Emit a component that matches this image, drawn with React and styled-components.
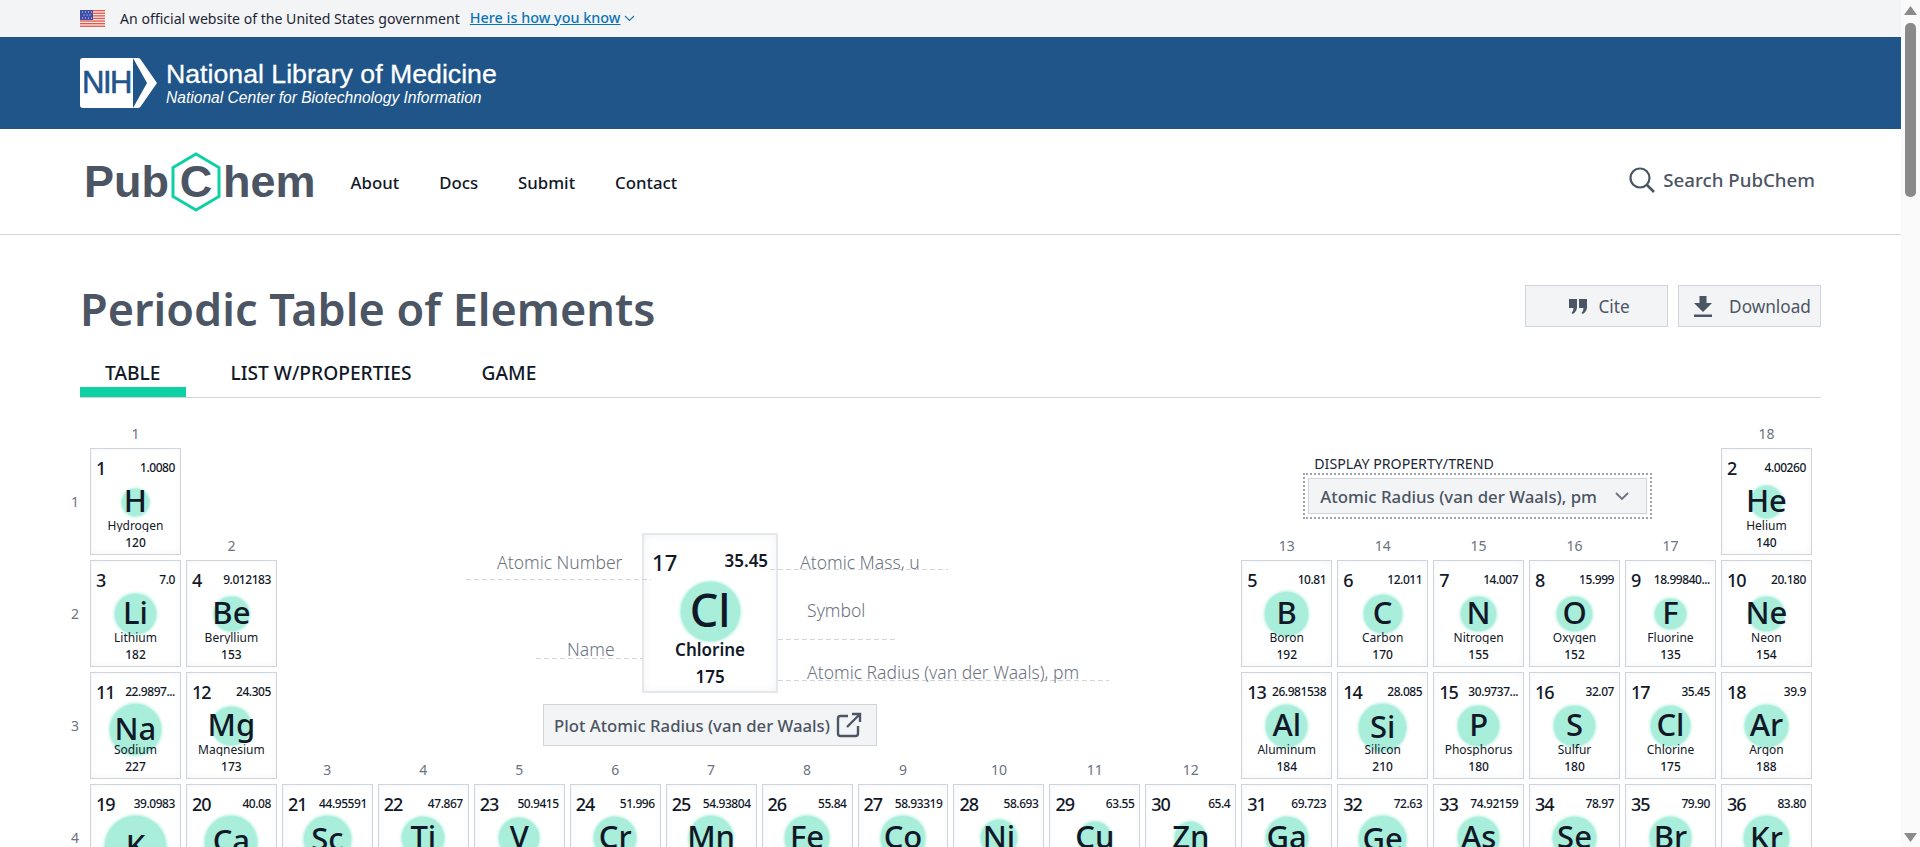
import styled, { createGlobalStyle } from "styled-components";

const GlobalStyle = createGlobalStyle`
    html, body {
        margin: 0;
        height: 100%;
        overflow: hidden;
        background: #ffffff;
        font-family: "Noto Sans", "Open Sans", sans-serif;
    }
    * {
        box-sizing: border-box;
    }
`;

const groupLabels = [
    { n: 1, col: 1, row: 0 },
    { n: 18, col: 18, row: 0 },
    { n: 2, col: 2, row: 1 },
    { n: 13, col: 13, row: 1 },
    { n: 14, col: 14, row: 1 },
    { n: 15, col: 15, row: 1 },
    { n: 16, col: 16, row: 1 },
    { n: 17, col: 17, row: 1 },
    { n: 3, col: 3, row: 3 },
    { n: 4, col: 4, row: 3 },
    { n: 5, col: 5, row: 3 },
    { n: 6, col: 6, row: 3 },
    { n: 7, col: 7, row: 3 },
    { n: 8, col: 8, row: 3 },
    { n: 9, col: 9, row: 3 },
    { n: 10, col: 10, row: 3 },
    { n: 11, col: 11, row: 3 },
    { n: 12, col: 12, row: 3 },
];

const elements = [
    [1, "H", "Hydrogen", "1.0080", 120, 1, 1],
    [2, "He", "Helium", "4.00260", 140, 1, 18],
    [3, "Li", "Lithium", "7.0", 182, 2, 1],
    [4, "Be", "Beryllium", "9.012183", 153, 2, 2],
    [5, "B", "Boron", "10.81", 192, 2, 13],
    [6, "C", "Carbon", "12.011", 170, 2, 14],
    [7, "N", "Nitrogen", "14.007", 155, 2, 15],
    [8, "O", "Oxygen", "15.999", 152, 2, 16],
    [9, "F", "Fluorine", "18.99840...", 135, 2, 17],
    [10, "Ne", "Neon", "20.180", 154, 2, 18],
    [11, "Na", "Sodium", "22.9897...", 227, 3, 1],
    [12, "Mg", "Magnesium", "24.305", 173, 3, 2],
    [13, "Al", "Aluminum", "26.981538", 184, 3, 13],
    [14, "Si", "Silicon", "28.085", 210, 3, 14],
    [15, "P", "Phosphorus", "30.9737...", 180, 3, 15],
    [16, "S", "Sulfur", "32.07", 180, 3, 16],
    [17, "Cl", "Chlorine", "35.45", 175, 3, 17],
    [18, "Ar", "Argon", "39.9", 188, 3, 18],
    [19, "K", "Potassium", "39.0983", 275, 4, 1],
    [20, "Ca", "Calcium", "40.08", 231, 4, 2],
    [21, "Sc", "Scandium", "44.95591", 211, 4, 3],
    [22, "Ti", "Titanium", "47.867", 187, 4, 4],
    [23, "V", "Vanadium", "50.9415", 179, 4, 5],
    [24, "Cr", "Chromium", "51.996", 189, 4, 6],
    [25, "Mn", "Manganese", "54.93804", 197, 4, 7],
    [26, "Fe", "Iron", "55.84", 194, 4, 8],
    [27, "Co", "Cobalt", "58.93319", 192, 4, 9],
    [28, "Ni", "Nickel", "58.693", 163, 4, 10],
    [29, "Cu", "Copper", "63.55", 140, 4, 11],
    [30, "Zn", "Zinc", "65.4", 139, 4, 12],
    [31, "Ga", "Gallium", "69.723", 187, 4, 13],
    [32, "Ge", "Germanium", "72.63", 211, 4, 14],
    [33, "As", "Arsenic", "74.92159", 185, 4, 15],
    [34, "Se", "Selenium", "78.97", 190, 4, 16],
    [35, "Br", "Bromine", "79.90", 183, 4, 17],
    [36, "Kr", "Krypton", "83.80", 202, 4, 18],
];

function Flag() {
    const stripes = [0, 2, 4, 6, 8, 10, 12];
    return (
        <svg width="25" height="17" viewBox="0 0 25 17">
            <rect width="25" height="17" fill="#f7e9e6" />
            {stripes.map((y) => (
                <rect key={y} y={y * 1.3} width="25" height="1.3" fill="#e0584c" />
            ))}
            <rect width="13" height="10" fill="#3f4fa8" />
            <path d="M2 2h1M5 2h1M8 2h1M11 2h1M3.500 5h1M6.500 5h1M9.500 5h1M2 8h1M5 8h1M8 8h1M11 8h1" stroke="#dfe3f5" strokeWidth="1" />
        </svg>
    );
}

function HexLogo() {
    return (
        <svg width="50" height="60" viewBox="0 0 50 60">
            <path d="M25 2 L48 15.500 L48 44.500 L25 58 L2 44.500 L2 15.500 Z" fill="none" stroke="#0dd0a4" strokeWidth="3" />
        </svg>
    );
}

function ElementCell({ el }) {
    const [number, symbol, name, mass, radius, row, col] = el;
    return (
        <Cell $row={row} $col={col}>
            <CellTop>
                <CellNumber>{number}</CellNumber>
                <CellMass>{mass}</CellMass>
            </CellTop>
            <SymbolZone>
                <Halo $size={radius * 0.225} />
                <CellSymbol>{symbol}</CellSymbol>
            </SymbolZone>
            <CellName>{name}</CellName>
            <CellValue>{radius}</CellValue>
        </Cell>
    );
}

export default function App() {
    return (
        <Screen>
            <GlobalStyle />
            <Main>
                <GovBar>
                    <Flag />
                    <GovText>An official website of the United States government</GovText>
                    <GovLink>Here is how you know</GovLink>
                    <svg width="11" height="7" viewBox="0 0 11 7">
                        <path d="M1 1l4.500 4.500L10 1" fill="none" stroke="#2379b5" strokeWidth="1.2" />
                    </svg>
                </GovBar>
                <NlmBar>
                    <NihBadge>
                        <NihMark>NIH</NihMark>
                        <svg width="26" height="50" viewBox="0 0 26 50">
                            <path d="M0 0h5q2 0 3 2l16 23-16 23q-1 2-3 2H0l14-25z" fill="#ffffff" />
                        </svg>
                    </NihBadge>
                    <NlmText>
                        <NlmTitle>National Library of Medicine</NlmTitle>
                        <NlmSub>National Center for Biotechnology Information</NlmSub>
                    </NlmText>
                </NlmBar>
                <NavBar>
                    <Logo>
                        Pub
                        <LogoHex>
                            <HexLogo />
                            <LogoC>C</LogoC>
                        </LogoHex>
                        hem
                    </Logo>
                    <NavLinks>
                        <NavLink>About</NavLink>
                        <NavLink>Docs</NavLink>
                        <NavLink>Submit</NavLink>
                        <NavLink>Contact</NavLink>
                    </NavLinks>
                    <SearchBox>
                        <svg width="26" height="26" viewBox="0 0 26 26">
                            <circle cx="11" cy="11" r="9.500" fill="none" stroke="#4b5563" strokeWidth="2.200" />
                            <path d="M18 18l7 7" stroke="#4b5563" strokeWidth="2.600" />
                        </svg>
                        <span>Search PubChem</span>
                    </SearchBox>
                </NavBar>
                <Content>
                    <TitleRow>
                        <Title>Periodic Table of Elements</Title>
                        <Actions>
                            <ActionButton>
                                <svg width="18" height="15" viewBox="0 0 18 15">
                                    <path d="M0 0h8v8q0 4-4 7l-1.500-1q2-2 2-5H0zM10 0h8v8q0 4-4 7l-1.500-1q2-2 2-5H10z" fill="#4b5563" />
                                </svg>
                                Cite
                            </ActionButton>
                            <ActionButton $wide>
                                <svg width="18" height="21" viewBox="0 0 18 21">
                                    <path d="M5.500 0h7v7H18l-9 9-9-9h5.500zM0 18.500h18V21H0z" fill="#4b5563" />
                                </svg>
                                Download
                            </ActionButton>
                        </Actions>
                    </TitleRow>
                    <Tabs>
                        <Tab $active>TABLE</Tab>
                        <Tab>LIST W/PROPERTIES</Tab>
                        <Tab>GAME</Tab>
                    </Tabs>
                    <TableGrid>
                        {groupLabels.map((g) => (
                            <GroupLabel key={g.n} $col={g.col} $row={g.row}>{g.n}</GroupLabel>
                        ))}
                        {[1, 2, 3, 4].map((r) => (
                            <PeriodLabel key={r} $row={r}>{r}</PeriodLabel>
                        ))}
                        {elements.map((el) => (
                            <ElementCell key={el[0]} el={el} />
                        ))}
                        <Legend>
                            <LegendCard>
                                <Callout $left={-178} $top={16} $width={185} $height={29} $pad={31}>Atomic Number</Callout>
                                <Callout $left={126} $top={16} $width={178} $height={19} $pad={30}>Atomic Mass, u</Callout>
                                <Callout $left={134} $top={64} $width={118} $height={41} $pad={29}>Symbol</Callout>
                                <Callout $left={-108} $top={103} $width={107} $height={21} $pad={31}>Name</Callout>
                                <Callout $left={134} $top={126} $width={331} $height={20} $pad={29}>Atomic Radius (van der Waals), pm</Callout>
                                <LegendTop>
                                    <LegendNumber>17</LegendNumber>
                                    <LegendMass>35.45</LegendMass>
                                </LegendTop>
                                <LegendSymbolZone>
                                    <Halo $size={59} />
                                    <LegendSymbol>Cl</LegendSymbol>
                                </LegendSymbolZone>
                                <LegendName>Chlorine</LegendName>
                                <LegendValue>175</LegendValue>
                            </LegendCard>
                            <PlotButton>
                                Plot Atomic Radius (van der Waals)
                                <svg width="26" height="26" viewBox="0 0 26 26" fill="none" stroke="#4b5563" strokeWidth="2.400">
                                    <path d="M12 4H4.500A2.500 2.500 0 0 0 2 6.500v15A2.500 2.500 0 0 0 4.500 24h15a2.500 2.500 0 0 0 2.500-2.500V14" />
                                    <path d="M11 15L24 2M16 2h8v8" />
                                </svg>
                            </PlotButton>
                        </Legend>
                        <PropertyPicker>
                            <PickerLabel>DISPLAY PROPERTY/TREND</PickerLabel>
                            <PickerFrame>
                                <PickerSelect>
                                    Atomic Radius (van der Waals), pm
                                    <svg width="14" height="9" viewBox="0 0 14 9">
                                        <path d="M1 1l6 6 6-6" fill="none" stroke="#6b7280" strokeWidth="1.800" />
                                    </svg>
                                </PickerSelect>
                            </PickerFrame>
                        </PropertyPicker>
                    </TableGrid>
                </Content>
            </Main>
            <ScrollTrack>
                <ScrollArrow viewBox="0 0 13 9" width="13" height="9">
                    <path d="M6.500 0L13 9H0z" fill="#8a8a8a" />
                </ScrollArrow>
                <ScrollThumb />
                <ScrollSpace />
                <ScrollArrow viewBox="0 0 13 9" width="13" height="9">
                    <path d="M0 0h13L6.500 9z" fill="#8a8a8a" />
                </ScrollArrow>
            </ScrollTrack>
        </Screen>
    );
}

const Screen = styled.div`
    display: flex;
    height: 847px;
    overflow: hidden;
`;

const Main = styled.main`
    width: 1901px;
    flex: none;
    overflow: hidden;
    color: #111827;
`;

const ScrollTrack = styled.div`
    width: 19px;
    flex: none;
    padding: 6px 0 5px;
    display: flex;
    flex-direction: column;
    align-items: center;
    background: #fafafa;
`;

const ScrollArrow = styled.svg`
    flex: none;
`;

const ScrollThumb = styled.div`
    width: 11px;
    height: 174px;
    margin-top: 8px;
    border-radius: 5px;
    background: #8a8a8a;
`;

const ScrollSpace = styled.div`
    flex: 1;
`;

const GovBar = styled.div`
    height: 37px;
    padding-left: 80px;
    display: flex;
    align-items: center;
    background: #f3f4f6;
`;

const GovText = styled.span`
    margin-left: 15px;
    font-size: 14.100px;
    color: #1b2533;
`;

const GovLink = styled.a`
    margin: 0 4px 2px 10px;
    font-size: 14.400px;
    font-weight: 500;
    color: #0b74b8;
    text-decoration: underline;
`;

const NlmBar = styled.div`
    height: 92px;
    padding-left: 80px;
    display: flex;
    align-items: center;
    background: #20558a;
    color: #ffffff;
    font-family: "Liberation Sans", Arial, sans-serif;
`;

const NihBadge = styled.div`
    display: flex;
    align-items: center;
`;

const NihMark = styled.div`
    width: 53px;
    height: 50px;
    border-radius: 3px 0 0 3px;
    background: #ffffff;
    color: #20558a;
    font-size: 31px;
    letter-spacing: -1.500px;
    line-height: 50px;
    text-align: center;
    -webkit-text-stroke: 0.6px #20558a;
`;

const NlmText = styled.div`
    margin-left: 7px;
`;

const NlmTitle = styled.div`
    font-size: 26.700px;
    line-height: 30px;
    -webkit-text-stroke: 0.3px #ffffff;
`;

const NlmSub = styled.div`
    font-size: 15.600px;
    font-style: italic;
    line-height: 18px;
`;

const NavBar = styled.nav`
    height: 106px;
    padding: 0 86px 0 84px;
    display: flex;
    align-items: center;
    border-bottom: 1px solid #d1d5db;
`;

const Logo = styled.div`
    display: flex;
    align-items: center;
    font-family: "Liberation Sans", Arial, sans-serif;
    font-weight: 700;
    font-size: 45px;
    color: #4b5563;
`;

const LogoHex = styled.div`
    display: grid;
    place-items: center;
    margin: 0 2px;

    > * {
        grid-area: 1 / 1;
    }
`;

const LogoC = styled.span`
    line-height: 1;
`;

const NavLinks = styled.div`
    margin: 2px 0 0 35px;
    display: flex;
    gap: 40px;
`;

const NavLink = styled.a`
    font-size: 16.800px;
    font-weight: 500;
    color: #111827;
`;

const SearchBox = styled.div`
    margin: 0 0 4px auto;
    display: flex;
    align-items: center;
    gap: 8px;
    font-size: 18.700px;
    font-weight: 500;
    color: #4b5563;
`;

const Content = styled.div`
    padding: 0 80px;
`;

const TitleRow = styled.div`
    height: 122px;
    display: flex;
    align-items: center;
    justify-content: space-between;
`;

const Title = styled.h1`
    margin: 24px 0 0;
    font-size: 45px;
    font-weight: 600;
    color: #4b5563;
`;

const Actions = styled.div`
    display: flex;
    gap: 10px;
    margin-top: 20px;
`;

const ActionButton = styled.button`
    width: 143px;
    height: 42px;
    padding: 0 0 0 6px;
    display: flex;
    align-items: center;
    justify-content: center;
    gap: ${(p) => (p.$wide ? "17px" : "11px")};
    border: 1px solid #d1d5db;
    background: #f3f4f6;
    color: #4b5563;
    font-family: inherit;
    font-size: 17.200px;
`;

const Tabs = styled.div`
    height: 41px;
    display: flex;
    border-bottom: 1px solid #d1d5db;
`;

const Tab = styled.div`
    height: 40px;
    padding: 0 25px;
    margin-right: 20px;
    font-size: 19.200px;
    font-weight: 500;
    line-height: 32px;
    color: #111827;
    border-bottom: 10px solid ${(p) => (p.$active ? "#0dd0a4" : "transparent")};
`;

const TableGrid = styled.div`
    margin: 20px 0 0 -20px;
    display: grid;
    grid-template-columns: 25px repeat(18, 90.940px);
    grid-template-rows: 24.500px repeat(4, 106.500px);
    column-gap: 5px;
    row-gap: 5.500px;
`;

const GroupLabel = styled.div`
    grid-column: ${(p) => p.$col + 1};
    grid-row: ${(p) => p.$row + 1};
    align-self: end;
    text-align: center;
    font-size: 14px;
    line-height: 18px;
    color: #6b7280;
`;

const PeriodLabel = styled.div`
    grid-column: 1;
    grid-row: ${(p) => p.$row + 1};
    align-self: center;
    text-align: center;
    padding-left: 5px;
    font-size: 14px;
    color: #6b7280;
`;

const Cell = styled.div`
    grid-column: ${(p) => p.$col + 1};
    grid-row: ${(p) => p.$row + 1};
    padding: 7px 5px 0;
    border: 1px solid #d1d5db;
    background: #ffffff;
    box-shadow: inset 0 0 6px rgba(209, 213, 219, 0.25);
    color: #111827;
    text-align: center;
`;

const CellTop = styled.div`
    height: 24px;
    display: flex;
    align-items: center;
    justify-content: space-between;
`;

const CellNumber = styled.span`
    font-size: 18px;
    font-weight: 500;
    letter-spacing: -1px;
`;

const CellMass = styled.span`
    margin-bottom: 2px;
    font-size: 12px;
    font-weight: 500;
    letter-spacing: -0.450px;
`;

const SymbolZone = styled.div`
    height: 44px;
    display: grid;
    place-items: center;

    > * {
        grid-area: 1 / 1;
    }
`;

const Halo = styled.div`
    width: ${(p) => p.$size}px;
    height: ${(p) => p.$size}px;
    border-radius: 50%;
    background: #a8eedb;
    box-shadow: 0 0 3px 1px #a8eedb;
`;

const CellSymbol = styled.span`
    position: relative;
    margin-bottom: 4px;
    font-size: 31px;
    font-weight: 500;
    line-height: 30px;
`;

const CellName = styled.div`
    height: 13px;
    margin-top: -5px;
    overflow: hidden;
    font-size: 12px;
    line-height: 13px;
    white-space: nowrap;
`;

const CellValue = styled.div`
    margin-top: 3px;
    font-size: 12px;
    font-weight: 500;
    line-height: 16px;
`;

const Legend = styled.div`
    grid-column: 4 / 13;
    grid-row: 2 / 5;
    padding: 85px 2px 0 0;
    display: flex;
    flex-direction: column;
    align-items: center;
`;

const LegendCard = styled.div`
    position: relative;
    width: 136px;
    height: 160px;
    padding: 0 8px;
    border: 2px solid #e5e7eb;
    background: #ffffff;
    box-shadow: inset 0 0 8px rgba(209, 213, 219, 0.3);
    text-align: center;
    color: #111827;
`;

const Callout = styled.div`
    position: absolute;
    left: ${(p) => p.$left}px;
    top: ${(p) => p.$top}px;
    width: ${(p) => p.$width}px;
    height: ${(p) => p.$height}px;
    padding-left: ${(p) => p.$pad}px;
    background: repeating-linear-gradient(90deg, #d1d5db 0 5px, transparent 5px 8px) bottom / 100% 1px no-repeat;
    font-size: 17.500px;
    font-weight: 300;
    line-height: 22px;
    color: #6b7280;
    text-align: left;
    white-space: nowrap;
`;

const LegendTop = styled.div`
    height: 34px;
    margin-top: 10px;
    display: flex;
    align-items: center;
    justify-content: space-between;
`;

const LegendNumber = styled.span`
    font-size: 22px;
    font-weight: 500;
`;

const LegendMass = styled.span`
    margin-bottom: 4px;
    font-size: 17px;
    font-weight: 600;
`;

const LegendSymbolZone = styled(SymbolZone)`
    height: 64px;
`;

const LegendSymbol = styled.span`
    position: relative;
    margin-bottom: 2px;
    font-size: 45px;
    font-weight: 500;
    line-height: 48px;
`;

const LegendName = styled.div`
    margin-top: -5px;
    font-size: 17px;
    font-weight: 600;
    line-height: 24px;
`;

const LegendValue = styled.div`
    margin-top: 3px;
    font-size: 17px;
    font-weight: 600;
    line-height: 24px;
`;

const PlotButton = styled.button`
    width: 334px;
    height: 42px;
    margin-top: 11px;
    padding: 0 14px 0 10px;
    display: flex;
    align-items: center;
    justify-content: space-between;
    border: 1px solid #d1d5db;
    background: #f3f4f6;
    color: #4b5563;
    font-family: inherit;
    font-size: 16.700px;
    font-weight: 500;
    white-space: nowrap;
`;

const PropertyPicker = styled.div`
    grid-column: 14 / 19;
    grid-row: 2;
    margin: 5px 0 0 62px;
    justify-self: start;
`;

const PickerLabel = styled.div`
    padding: 1px 0 0 11px;
    height: 20px;
    font-size: 14.200px;
    line-height: 20px;
    color: #1b2533;
`;

const PickerFrame = styled.div`
    width: 349px;
    height: 46px;
    padding: 3px;
    border: 2px dotted #9ca3af;
`;

const PickerSelect = styled.div`
    height: 100%;
    padding: 0 17px 0 11px;
    display: flex;
    align-items: center;
    justify-content: space-between;
    border: 1px solid #d1d5db;
    background: #f3f4f6;
    color: #4b5563;
    font-size: 16.800px;
    font-weight: 500;
    white-space: nowrap;
`;
